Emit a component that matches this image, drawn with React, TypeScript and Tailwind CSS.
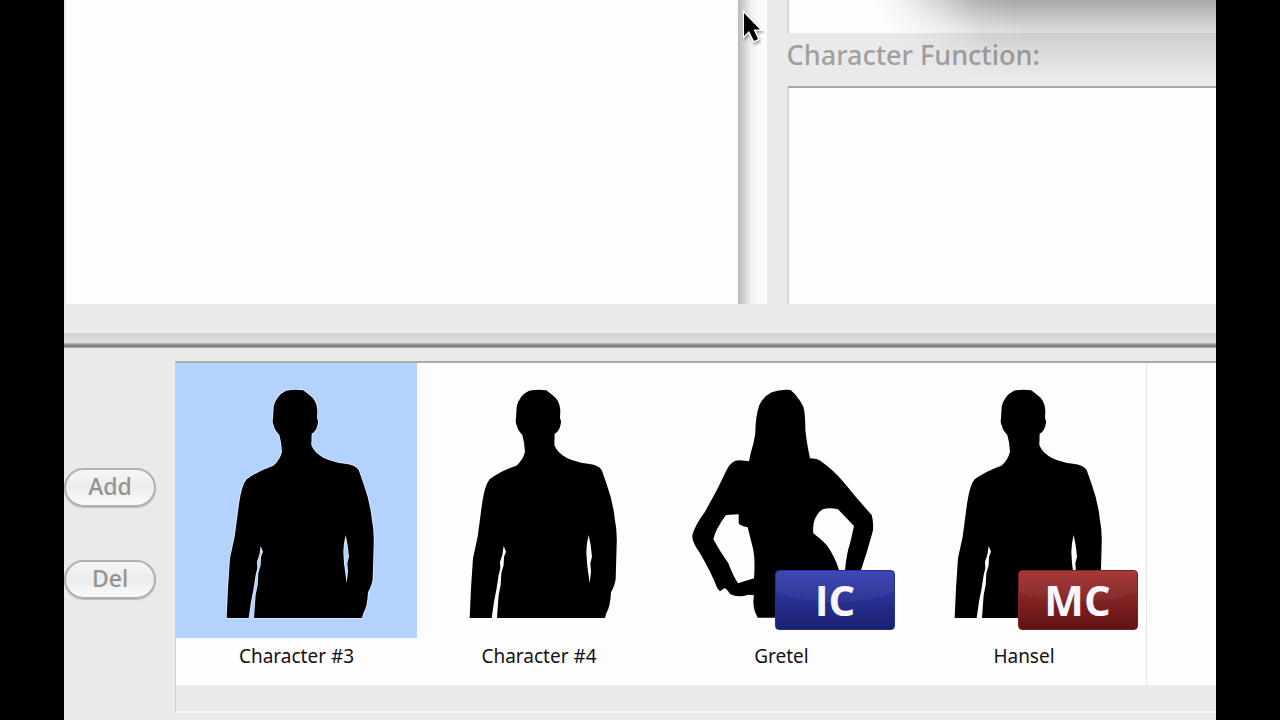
import clsx from 'clsx';

type Figure = 'man' | 'woman';

interface Character {
  name: string;
  figure: Figure;
  badge?: 'IC' | 'MC';
}

const characters: Character[] = [
  { name: 'Character #3', figure: 'man' },
  { name: 'Character #4', figure: 'man' },
  { name: 'Gretel', figure: 'woman', badge: 'IC' },
  { name: 'Hansel', figure: 'man', badge: 'MC' },
];

function ManFigure() {
  return (
    <svg viewBox="18 24 723 825" className="block h-full w-full" aria-hidden="true">
      <path
        fillRule="evenodd"
        className="fill-black stroke-white/60 [paint-order:stroke] [stroke-width:5]"
        d="M348 107Q375 102 400 106L418 120Q440 135 442 165L441 190Q447 200 441 215Q437 230 425 236L424 270Q432 292 460 308Q490 322 525 326Q555 328 566 345L580 385Q600 440 605 490Q613 530 611 570L608 672Q606 690 594 712Q592 755 580 775L576 789L252 789L254 760L257 720L263 690L265 655L272 630L273 605L279 590L272 573L268 600L261 620L262 640L257 660L250 705L243 740L236 789L170 789L174 700L180 610L194 545L208 440Q216 390 230 373Q260 350 310 332Q330 315 336 290L333 262L328 240Q312 222 312 212Q306 205 309 190L311 155Q318 122 348 107ZM527 540L522 565L520 590L522 625L530 685L534 650L532 625L537 605L533 570Z"
      />
    </svg>
  );
}

function WomanFigure() {
  return (
    <svg viewBox="-57 -21 723 825" className="block h-full w-full" aria-hidden="true">
      <path
        fillRule="evenodd"
        className="fill-black"
        d="M275 67Q300 57 332 60Q355 80 370 110Q376 130 376 180Q382 230 390 265Q410 265 425 275Q460 300 490 335Q530 385 575 435Q582 460 578 485Q560 550 540 610L540 640L290 743L233 743L225 725Q217 705 222 676L205 674Q175 685 150 672Q140 655 133 655L120 664L112 655Q95 610 60 550Q35 515 37 495Q45 465 75 425Q110 365 140 300Q155 270 178 271Q195 272 207 274L212 250Q222 220 226 190Q226 140 238 105Q250 80 275 67ZM138 435L176 433L176 460Q180 468 203 472Q210 500 220 540Q226 570 222 625L205 630L174 640Q160 620 145 580Q120 545 100 508Q105 480 138 435ZM428 418Q450 412 474 418L522 468Q515 500 510 520Q500 550 495 600L477 600Q465 560 440 525Q420 505 400 490Q398 470 402 455Q410 430 428 418Z"
      />
    </svg>
  );
}

function RoleBadge({ role }: { role: 'IC' | 'MC' }) {
  return (
    <span
      className={clsx(
        "absolute right-[7px] bottom-2 flex h-[60px] w-[120px] items-center justify-center rounded-[4px] border font-['Open_Sans','Noto_Sans',sans-serif] text-[42px] leading-[58px] font-bold text-[#f8f6fc]",
        role === 'IC'
          ? 'border-[#28318f] bg-linear-to-b from-[#3641b4] to-[#1a2070]'
          : 'border-[#7d2020] bg-linear-to-b from-[#a43233] to-[#611314]'
      )}
    >
      <svg viewBox="0 0 118 58" className="absolute inset-0 h-full w-full" aria-hidden="true">
        <path d="M3 0H115L118 3V22Q59 40 0 22V3Z" className="fill-white/4" />
      </svg>
      <span className="relative">{role}</span>
    </span>
  );
}

function CharacterItem({ character, selected }: { character: Character; selected: boolean }) {
  return (
    <li className="flex flex-col">
      <div className={clsx('relative h-[275px] w-[241px]', selected && 'bg-[#b3d3fe]')}>
        {character.figure === 'man' ? <ManFigure /> : <WomanFigure />}
        {character.badge && <RoleBadge role={character.badge} />}
      </div>
      <span className="h-[47px] w-[241px] pt-1 text-center text-[19px] leading-7 text-[#111]">
        {character.name}
      </span>
    </li>
  );
}

function PillButton({ children }: { children: string }) {
  return (
    <button
      type="button"
      className="h-[39px] w-[92px] rounded-full border-2 border-[#b0b0b0] bg-linear-to-b from-[#f6f6f6] via-[#ececec] to-[#fbfbfb] pb-[2px] text-[23px] leading-none font-medium text-[#939393] shadow-[0_1px_1px_rgba(0,0,0,0.2)]"
    >
      {children}
    </button>
  );
}

function Pointer() {
  return (
    <svg viewBox="0 0 24 38" className="absolute top-[9px] right-0 h-[38px] w-6 drop-shadow-[1px_2px_1px_rgba(0,0,0,0.35)]" aria-hidden="true">
      <path
        d="M1 4V27L6 22L11 32L15 30L10.500 20.500H17Z"
        className="fill-black stroke-white [paint-order:stroke] [stroke-width:3]"
      />
    </svg>
  );
}

export default function App() {
  return (
    <div className="flex h-screen flex-col overflow-hidden bg-black px-[5%] font-['Noto_Sans','Open_Sans',sans-serif]">
      <main className="flex min-h-0 flex-1 flex-col bg-[#ebeaeb]">
        <div className="relative flex min-h-0 flex-1">
          <textarea
            aria-label="Notes"
            className="min-w-0 flex-[61] resize-none border-l-2 border-[#ebeaeb] bg-[#fefdfe] outline-none"
          />
          <div className="relative w-[29px] bg-linear-to-r from-[#b9b9b9] via-[#f1f1f1] via-45% to-[#fcfcfc] to-85%">
            <Pointer />
          </div>
          <section className="flex min-w-0 flex-[39] flex-col pl-5">
            <textarea
              aria-label="Character description"
              className="h-[33px] resize-none border-l-2 border-[#d5d5d5] bg-[#fefdfe] outline-none"
            />
            <label htmlFor="function" className="h-[53px] pt-1 text-[27px] leading-9 font-medium text-[#a0a0a0]">
              Character Function:
            </label>
            <textarea
              id="function"
              className="min-h-0 flex-1 resize-none border-t-2 border-l-2 border-t-[#a5a5a5] border-l-[#d5d5d5] bg-[#fefdfe] outline-none"
            />
          </section>
          {/* soft shadow of the floating window above */}
          <div className="pointer-events-none absolute top-0 right-0 h-[85px] w-[346px] bg-linear-to-b from-black/33 via-black/12 via-39% to-transparent to-90% [mask-image:linear-gradient(70deg,transparent_9%,rgba(0,0,0,0.15)_17%,rgba(0,0,0,0.5)_27%,rgba(0,0,0,0.85)_35%,black_46%)]" />
        </div>

        <div className="h-[29px]" />
        <div className="h-[10px] bg-linear-to-b from-[#d3d3d3] to-[#e0e0e0]" />
        <div className="h-[5px] bg-linear-to-b from-[#c0c0c0] via-[#707070] via-60% to-[#b8b8b8]" />

        <div className="flex pt-[13px]">
          <div className="flex w-[111px] flex-col gap-[53px] pt-[107px]">
            <PillButton>Add</PillButton>
            <PillButton>Del</PillButton>
          </div>
          <div className="min-w-0 flex-1 border-t-2 border-l border-t-[#aaaaaa] border-l-[#d0d0d0]">
            <div className="bg-[#fefdfe]">
              <ul className="grid w-[971px] grid-cols-4 border-r border-[#e8e7e8]">
                {characters.map((character, index) => (
                  <CharacterItem key={character.name} character={character} selected={index === 0} />
                ))}
              </ul>
            </div>
            <div className="h-7 border-b-2 border-[#f8f8f8]" />
          </div>
        </div>
        <div className="h-[7px]" />
      </main>
    </div>
  );
}
